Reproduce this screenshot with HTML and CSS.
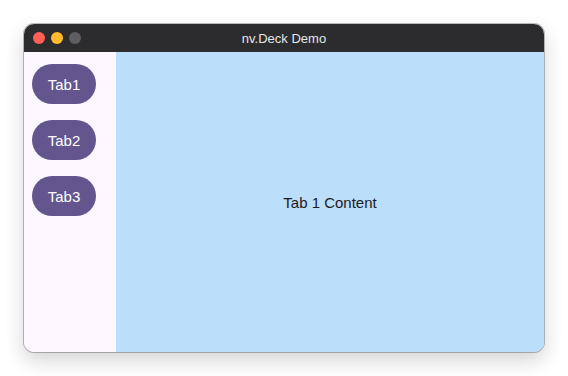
FILE: index.html
```html
<!DOCTYPE html>
<html lang="en">
<head>
    <meta charset="UTF-8">
    <title>nv.Deck Demo</title>
    <link rel="stylesheet" href="styles.css">
</head>
<body>

    <div class="window">
        <!-- Title bar -->
        <div class="titlebar">
            <div class="lights">
                <span class="light close"></span>
                <span class="light min"></span>
                <span class="light max"></span>
            </div>
            <span class="title">nv.Deck Demo</span>
        </div>

        <div class="main">
            <!-- Tab rail -->
            <div class="rail">
                <button class="tab">Tab1</button>
                <button class="tab">Tab2</button>
                <button class="tab">Tab3</button>
            </div>

            <!-- Deck content -->
            <div class="deck">
                <p>Tab 1 Content</p>
            </div>
        </div>
    </div>

</body>
</html>
```

FILE: styles.css
```css
/* General Styling */
html, body {
    height: 100%;
}

body {
    margin: 0;
    background-color: #ffffff;
    font-family: "Liberation Sans", Arial, sans-serif;
}

.window {
    width: 520px;
    height: 328px;
    margin: 24px 0 0 24px;
    border-radius: 10px;
    overflow: hidden;
    display: flex;
    flex-direction: column;
    box-shadow: 0 0 0 1px rgba(0, 0, 0, 0.25), 0 8px 20px rgba(0, 0, 0, 0.18);
}

/* Title bar */
.titlebar {
    position: relative;
    height: 28px;
    background-color: #2c2c2e;
    display: flex;
    align-items: center;
    justify-content: center;
    flex-shrink: 0;
}

.lights {
    position: absolute;
    left: 9px;
    top: 8px;
    display: flex;
    gap: 6px;
}

.light {
    width: 12px;
    height: 12px;
    border-radius: 50%;
}

.close { background-color: #fe5f57; }
.min { background-color: #febc2e; }
.max { background-color: #5e5e60; }

.title {
    color: #e6e6e6;
    font-size: 13px;
}

/* Main area */
.main {
    flex: 1;
    display: flex;
}

.rail {
    width: 84px;
    background-color: #fdf7ff;
    display: flex;
    flex-direction: column;
    align-items: flex-start;
    gap: 16px;
    padding: 12px 0 0 8px;
}

.tab {
    width: 64px;
    height: 40px;
    border: none;
    border-radius: 20px;
    background-color: #65558f;
    color: #ffffff;
    font-family: "Liberation Sans", Arial, sans-serif;
    font-size: 15px;
    padding: 0;
}

.deck {
    flex: 1;
    background-color: #bbdefa;
    display: flex;
    align-items: center;
    justify-content: center;
}

.deck p {
    margin: 0;
    font-size: 15px;
    color: #1c1b1f;
}
```
